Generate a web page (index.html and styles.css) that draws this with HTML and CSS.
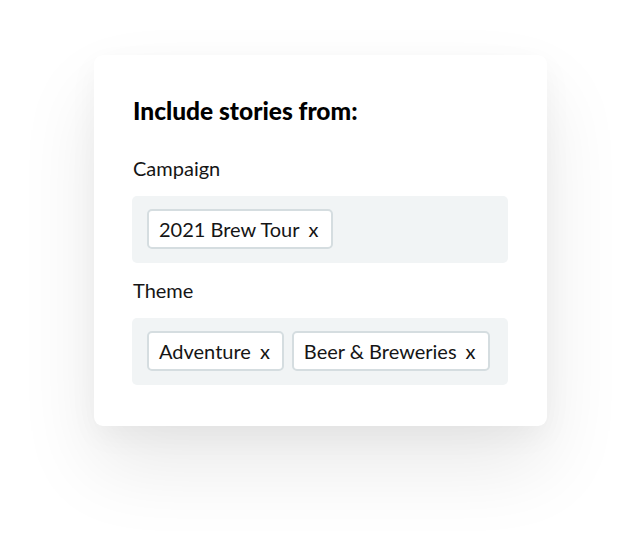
FILE: index.html
```html
<!DOCTYPE html>
<html>
<head>
<meta charset="utf-8">
<link rel="stylesheet" href="styles.css">
</head>
<body>
<div class="page">
  <div class="card">
    <h2 class="title">Include stories from:</h2>
    <div class="label">Campaign</div>
    <div class="field">
      <span class="chip">2021 Brew Tour<span class="x">x</span></span>
    </div>
    <div class="label label-2">Theme</div>
    <div class="field">
      <span class="chip">Adventure<span class="x">x</span></span>
      <span class="chip">Beer &amp; Breweries<span class="x">x</span></span>
    </div>
  </div>
</div>
</body>
</html>
```
FILE: styles.css
```css
html, body { margin: 0; padding: 0; background: #fff; }
html, body { height: 557px; overflow: hidden; }
body { font-family: Lato, "Open Sans", sans-serif; color: #151515; }
.page { padding: 55px 0 0 94px; height: 557px; box-sizing: border-box; }
.card {
  width: 453px;
  height: 371px;
  box-sizing: border-box;
  background: #fff;
  border-radius: 9px;
  padding: 41px 39px 0 38px;
  box-shadow: 0 40px 80px rgba(0,0,0,0.09), 0 10px 30px rgba(0,0,0,0.04);
}
.title {
  margin: 0;
  font-size: 24.5px;
  font-weight: 900;
  line-height: 30px;
  color: #000;
  padding-left: 1px;
}
.label {
  font-size: 20px;
  line-height: 24px;
  margin-top: 30px;
  margin-bottom: 16px;
  padding-left: 1px;
}
.label-2 { margin-top: 15px; }
.field {
  background: #f1f4f5;
  border-radius: 5px;
  padding: 13px 14px 14px 15px;
  display: flex;
  gap: 8px;
}
.chip {
  display: inline-flex;
  align-items: center;
  height: 40px;
  box-sizing: border-box;
  border: 2px solid #d5dde0;
  border-radius: 5px;
  background: #fff;
  padding: 0 12px 0 10px;
  font-size: 20px;
}
.x { margin-left: 9px; }
```
